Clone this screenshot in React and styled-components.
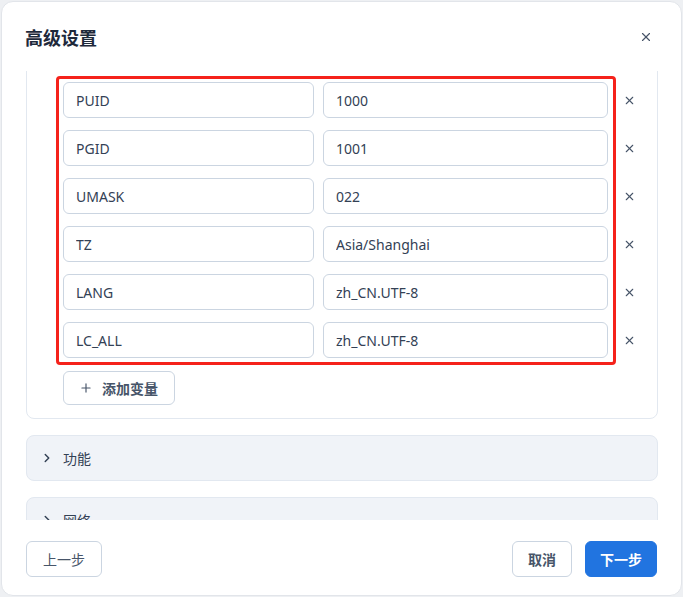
import React, { useLayoutEffect, useRef } from "react";
import styled, { createGlobalStyle } from "styled-components";
import { ChevronRight, Plus, X } from "lucide-react";

const GlobalStyle = createGlobalStyle`
  html, body {
    margin: 0;
    padding: 0;
    background: #eef0f3;
  }
  body {
    font-family: "Noto Sans", "Noto Sans CJK SC", sans-serif;
    color: #334155;
  }
  * {
    box-sizing: border-box;
  }
`;

const Dialog = styled.div`
  margin: 1px;
  width: 681px;
  height: 595px;
  background: #ffffff;
  border: 1px solid #e2e5ea;
  border-radius: 12px;
  display: flex;
  flex-direction: column;
  overflow: hidden;
`;

const Header = styled.div`
  height: 69px;
  flex-shrink: 0;
  display: flex;
  align-items: center;
  justify-content: space-between;
  padding: 0 23px 0 23px;
`;

const Title = styled.h2`
  margin: 0;
  font-size: 18px;
  font-weight: 700;
  color: #1e293b;
  font-family: "Noto Sans CJK SC", "Noto Sans", sans-serif;
`;

const IconButton = styled.button`
  border: none;
  background: transparent;
  padding: 0;
  width: 24px;
  height: 24px;
  display: flex;
  align-items: center;
  justify-content: center;
  color: #475569;
  cursor: pointer;
`;

const Body = styled.div`
  flex: 1;
  overflow-y: auto;
  scrollbar-width: none;
  padding: 0 23px 0 24px;
  display: flex;
  flex-direction: column;
  gap: 16px;
  &::-webkit-scrollbar {
    display: none;
  }
`;

const Card = styled.div`
  flex-shrink: 0;
  border: 1px solid #e2e8f0;
  border-radius: 8px;
  padding: 14px 16px 13px 36px;
`;

const CardTitle = styled.div`
  margin: 0 0 14px -20px;
  font-size: 14px;
  font-weight: 600;
  color: #334155;
  display: flex;
  align-items: center;
  gap: 6px;
`;

const VarList = styled.div`
  position: relative;
  display: flex;
  flex-direction: column;
  gap: 12px;
`;

const Highlight = styled.div`
  position: absolute;
  left: -7px;
  top: -6px;
  width: 560px;
  height: 289px;
  border: 3px solid #f5221b;
  border-radius: 4px;
  pointer-events: none;
`;

const VarRow = styled.div`
  display: grid;
  grid-template-columns: 251px 285px 1fr;
  column-gap: 9px;
  align-items: center;
`;

const Field = styled.input`
  height: 36px;
  width: 100%;
  border: 1px solid #cbd5e1;
  border-radius: 6px;
  padding: 0 12px;
  font-family: "Noto Sans", "Noto Sans CJK SC", sans-serif;
  font-size: 14px;
  color: #334155;
  background: #fff;
  outline: none;
`;

const RemoveButton = styled(IconButton)`
  justify-self: center;
`;

const AddButton = styled.button`
  margin-top: 13px;
  height: 34px;
  padding: 0 16px 0 15px;
  display: inline-flex;
  align-items: center;
  gap: 9px;
  border: 1px solid #cbd5e1;
  border-radius: 6px;
  background: #fff;
  color: #475569;
  font-family: "Noto Sans CJK SC", "Noto Sans", sans-serif;
  font-size: 14px;
  font-weight: 700;
`;

const Section = styled.div`
  flex-shrink: 0;
  height: 46px;
  border: 1px solid #e2e8f0;
  border-radius: 8px;
  background: #f0f3f8;
  display: flex;
  align-items: center;
  gap: 9px;
  padding: 0 13px;
  font-size: 14px;
  color: #334155;
  font-family: "Noto Sans CJK SC", "Noto Sans", sans-serif;
`;

const Footer = styled.div`
  height: 75px;
  flex-shrink: 0;
  display: flex;
  align-items: center;
  justify-content: space-between;
  padding: 3px 24px 0 24px;
`;

const FooterRight = styled.div`
  display: flex;
  gap: 13px;
`;

const Button = styled.button`
  height: 36px;
  padding: 0 ${(p) => (p.$primary ? 14 : p.$bold ? 15 : 16)}px;
  border-radius: 6px;
  font-family: "Noto Sans CJK SC", "Noto Sans", sans-serif;
  font-size: 14px;
  font-weight: ${(p) => (p.$bold ? 700 : 400)};
  border: 1px solid ${(p) => (p.$primary ? "#2174e0" : "#cbd5e1")};
  background: ${(p) => (p.$primary ? "#2174e0" : "#ffffff")};
  color: ${(p) => (p.$primary ? "#ffffff" : "#475569")};
  cursor: pointer;
`;

const vars = [
  ["PUID", "1000"],
  ["PGID", "1001"],
  ["UMASK", "022"],
  ["TZ", "Asia/Shanghai"],
  ["LANG", "zh_CN.UTF-8"],
  ["LC_ALL", "zh_CN.UTF-8"],
];

export default function App() {
  const bodyRef = useRef(null);
  const listRef = useRef(null);

  useLayoutEffect(() => {
    const body = bodyRef.current;
    const list = listRef.current;
    if (!body || !list) return;
    const offset =
      list.getBoundingClientRect().top - body.getBoundingClientRect().top;
    body.scrollTop += offset - 11;
  }, []);

  return (
    <>
      <GlobalStyle />
      <Dialog>
        <Header>
          <Title>高级设置</Title>
          <IconButton aria-label="关闭">
            <X size={14} strokeWidth={2} />
          </IconButton>
        </Header>
        <Body ref={bodyRef}>
          <Section>
            <ChevronRight size={14} strokeWidth={2.5} />
            存储
          </Section>
          <Card>
            <CardTitle>环境变量</CardTitle>
            <VarList ref={listRef}>
              <Highlight />
              {vars.map(([k, v]) => (
                <VarRow key={k}>
                  <Field defaultValue={k} />
                  <Field defaultValue={v} />
                  <RemoveButton aria-label="删除">
                    <X size={13} strokeWidth={2} />
                  </RemoveButton>
                </VarRow>
              ))}
            </VarList>
            <AddButton>
              <Plus size={14} strokeWidth={2} />
              添加变量
            </AddButton>
          </Card>
          <Section>
            <ChevronRight size={14} strokeWidth={2.5} />
            功能
          </Section>
          <Section>
            <ChevronRight size={14} strokeWidth={2.5} />
            网络
          </Section>
          <Section>
            <ChevronRight size={14} strokeWidth={2.5} />
            资源
          </Section>
        </Body>
        <Footer>
          <Button>上一步</Button>
          <FooterRight>
            <Button $bold>取消</Button>
            <Button $primary $bold>
              下一步
            </Button>
          </FooterRight>
        </Footer>
      </Dialog>
    </>
  );
}
